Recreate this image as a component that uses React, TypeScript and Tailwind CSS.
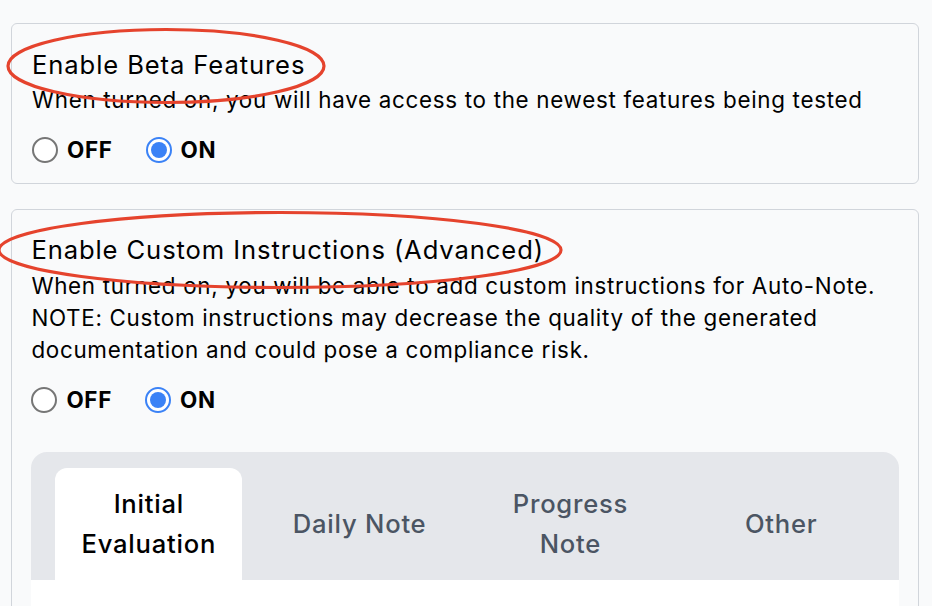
import { useState } from "react";

const font = { fontFamily: "Inter, 'Noto Sans', sans-serif" };

function Radio({ checked, label, onClick }: { checked: boolean; label: string; onClick: () => void }) {
  return (
    <button onClick={onClick} className="flex items-center gap-[9px]">
      {checked ? (
        <span className="w-[26px] h-[26px] rounded-full border-2 border-[#3b82f6] bg-white flex items-center justify-center">
          <span className="w-[16px] h-[16px] rounded-full bg-[#3b82f6]" />
        </span>
      ) : (
        <span className="w-[26px] h-[26px] rounded-full border-2 border-[#767676] bg-white" />
      )}
      <span className="text-[22.4px] leading-[26px] font-bold tracking-[0.03em] text-black">{label}</span>
    </button>
  );
}

function Toggle() {
  const [on, setOn] = useState(true);
  return (
    <div className="flex items-center gap-[33px]">
      <Radio checked={!on} label="OFF" onClick={() => setOn(false)} />
      <Radio checked={on} label="ON" onClick={() => setOn(true)} />
    </div>
  );
}

const tabs = [["Initial", "Evaluation"], ["Daily Note"], ["Progress", "Note"], ["Other"]];

export default function App() {
  const [tab, setTab] = useState(0);

  return (
    <div className="relative min-h-screen bg-[#f9fafb] pl-[11px] pr-[13px] pt-[23px] pb-8 text-black" style={font}>
      {/* Beta features */}
      <div className="border-[1.6px] border-[#d1d5db] rounded-md px-[20px] pt-[22px] pb-[20px]">
        <h3 className="text-[25.6px] leading-[38.4px] font-normal tracking-[0.035em]">Enable Beta Features</h3>
        <p className="text-[22.4px] leading-[32px] tracking-[0.031em]">
          When turned on, you will have access to the newest features being tested
        </p>
        <div className="mt-[21px]">
          <Toggle />
        </div>
      </div>

      {/* Custom instructions */}
      <div className="mt-[25px] border-[1.6px] border-[#d1d5db] rounded-md px-[19.4px] pt-[21px] pb-[20px]">
        <h3 className="text-[25.6px] leading-[38.4px] font-normal tracking-[0.035em]">
          Enable Custom Instructions (Advanced)
        </h3>
        <p className="text-[22.4px] leading-[32px] tracking-[0.031em]">
          When turned on, you will be able to add custom instructions for Auto-Note.
          <br />
          NOTE: Custom instructions may decrease the quality of the generated
          <br />
          documentation and could pose a compliance risk.
        </p>
        <div className="mt-[21px]">
          <Toggle />
        </div>

        <div className="mt-[39px]">
          <div className="bg-[#e5e7eb] rounded-t-2xl px-3 pt-4 flex">
            {tabs.map((t, i) => (
              <button
                key={i}
                onClick={() => setTab(i)}
                className={`flex-1 mx-3 py-4 rounded-t-xl text-[25.6px] leading-[40px] font-medium tracking-[0.03em] flex flex-col items-center justify-center ${
                  tab === i ? "bg-white text-black" : "text-[#4b5563]"
                }`}
              >
                {t.map((line) => (
                  <span key={line}>{line}</span>
                ))}
              </button>
            ))}
          </div>
          <div className="bg-white h-[120px]" />
        </div>
      </div>

      {/* annotation ellipses */}
      <svg className="absolute left-0 top-0 pointer-events-none" width="932" height="606">
        <ellipse cx="166" cy="66" rx="158" ry="36.5" fill="none" stroke="#e5432d" strokeWidth="3.2" />
        <ellipse cx="280" cy="250" rx="281" ry="37.5" fill="none" stroke="#e5432d" strokeWidth="3.2" />
      </svg>
    </div>
  );
}
